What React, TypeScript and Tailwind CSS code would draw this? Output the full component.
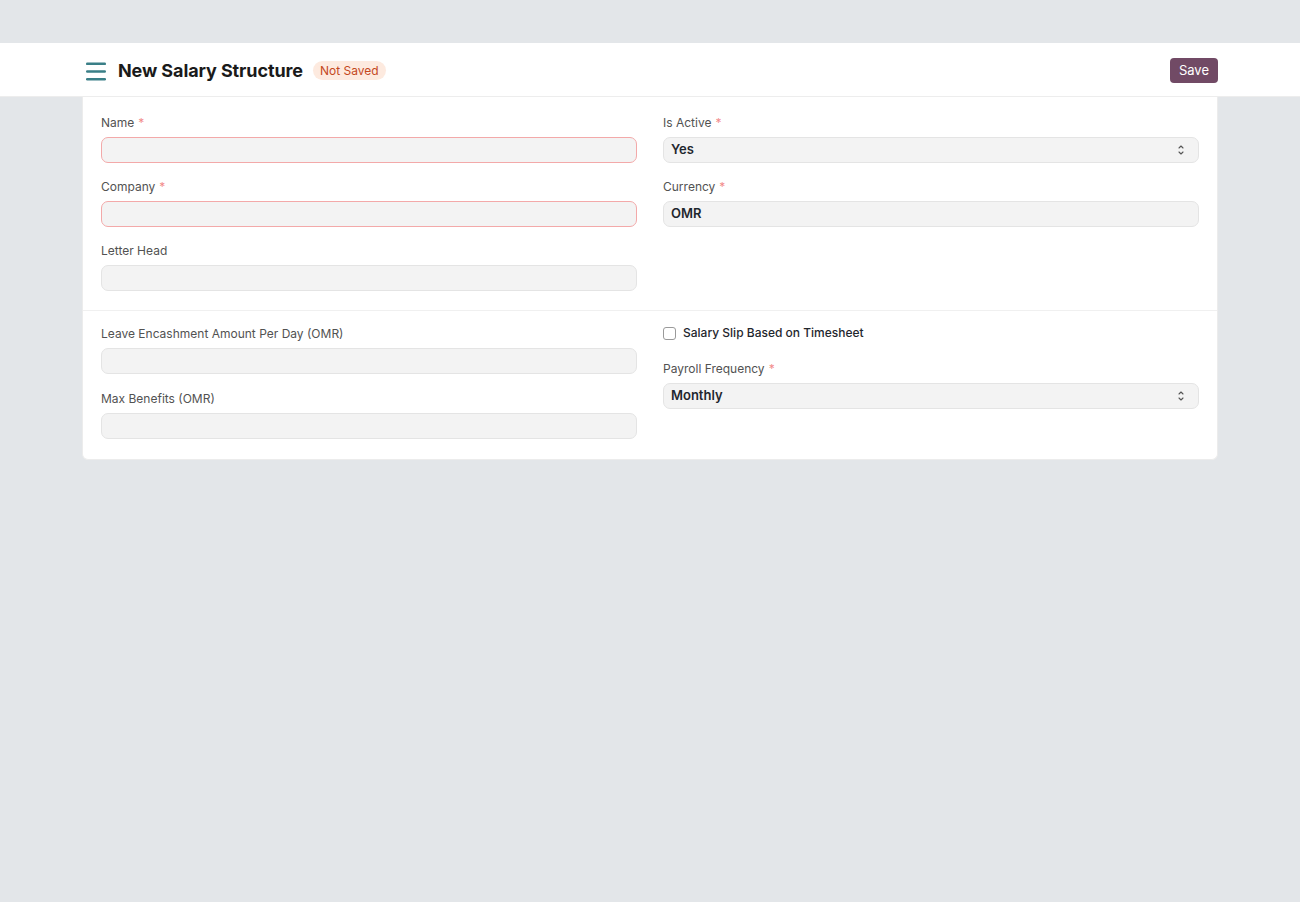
import React from "react";

const font = { fontFamily: "Inter, 'Noto Sans', sans-serif" };

function Label({ text, req }: { text: string; req?: boolean }) {
  return (
    <div className="h-[18px] mb-[6px] text-[12px] leading-[20px] text-[#525252]">
      {text}
      {req && <span className="text-[#f28b8b] ml-[4px]">*</span>}
    </div>
  );
}

function Input({ req, value }: { req?: boolean; value?: string }) {
  return (
    <div
      className={
        "h-[26px] rounded-[7px] bg-[#f3f3f3] px-[7px] flex items-center text-[13px] font-semibold text-[#1f272e] " +
        (req ? "border border-[#f3a9a9]" : "border border-[#e4e4e4]")
      }
    >
      {value}
    </div>
  );
}

function Select({ value }: { value: string }) {
  return (
    <div className="h-[26px] rounded-[7px] bg-[#f3f3f3] border border-[#e4e4e4] pl-[7px] pr-[13px] flex items-center justify-between text-[13px] font-semibold text-[#1f272e]">
      <span>{value}</span>
      <svg width="8" height="14" viewBox="0 0 8 14" fill="none" stroke="#555" strokeWidth="1.1" strokeLinecap="round" strokeLinejoin="round">
        <path d="M2 5 L4 3 L6 5" />
        <path d="M2 9 L4 11 L6 9" />
      </svg>
    </div>
  );
}

function Field({ label, req, wide, children }: { label: string; req?: boolean; wide?: boolean; children: React.ReactNode }) {
  return (
    <div className={wide ? "mb-[15px]" : "mb-[14px]"}>
      <Label text={label} req={req} />
      {children}
    </div>
  );
}

export default function App() {
  return (
    <div className="min-h-[902px] bg-[#e3e6e9]" style={font}>
      <div className="h-[43px]" />
      <div className="bg-white h-[54px] border-b border-[#ededed]">
        <div className="w-[1136px] mx-auto h-full pt-[2px] flex items-center justify-between">
          <div className="flex items-center">
            <svg width="22" height="20" viewBox="0 0 22 20" className="ml-[3px]">
              <rect x="1" y="1.5" width="20" height="2.6" rx="1.2" fill="#3a7f87" />
              <rect x="1" y="9.2" width="20" height="2.6" rx="1.2" fill="#3a7f87" />
              <rect x="1" y="16.9" width="20" height="2.6" rx="1.2" fill="#3a7f87" />
            </svg>
            <h1 className="ml-[11px] text-[18px] font-bold text-[#1a1a1a] tracking-[-0.1px]">New Salary Structure</h1>
            <span className="ml-[10px] h-[19px] px-[7px] rounded-full bg-[#fdeadf] text-[#c4481d] text-[12px] leading-[19px]">
              Not Saved
            </span>
          </div>
          <button className="h-[25px] px-[9px] rounded-[4px] bg-[#714a65] text-white text-[13px] leading-[25px]">
            Save
          </button>
        </div>
      </div>
      <div className="w-[1136px] mx-auto bg-white border border-t-0 border-[#ececec] rounded-b-[6px]">
        <div className="px-[18px] pt-[16px] pb-[5px] grid grid-cols-2 gap-x-[26px] border-b border-[#f0f0f0]">
          <div>
            <Field label="Name" req>
              <Input req />
            </Field>
            <Field label="Company" req>
              <Input req />
            </Field>
            <Field label="Letter Head">
              <Input />
            </Field>
          </div>
          <div>
            <Field label="Is Active" req>
              <Select value="Yes" />
            </Field>
            <Field label="Currency" req>
              <Input value="OMR" />
            </Field>
          </div>
        </div>
        <div className="px-[18px] pt-[13px] pb-[5px] grid grid-cols-2 gap-x-[26px]">
          <div>
            <Field label="Leave Encashment Amount Per Day (OMR)" wide>
              <Input />
            </Field>
            <Field label="Max Benefits (OMR)" wide>
              <Input />
            </Field>
          </div>
          <div>
            <div className="h-[18px] mb-[17px] flex items-center text-[12px] text-[#1f272e] font-medium">
              <span className="w-[13px] h-[13px] rounded-[3px] border border-[#9a9a9a] bg-white mr-[7px]" />
              Salary Slip Based on Timesheet
            </div>
            <Field label="Payroll Frequency" req>
              <Select value="Monthly" />
            </Field>
          </div>
        </div>
      </div>
    </div>
  );
}
